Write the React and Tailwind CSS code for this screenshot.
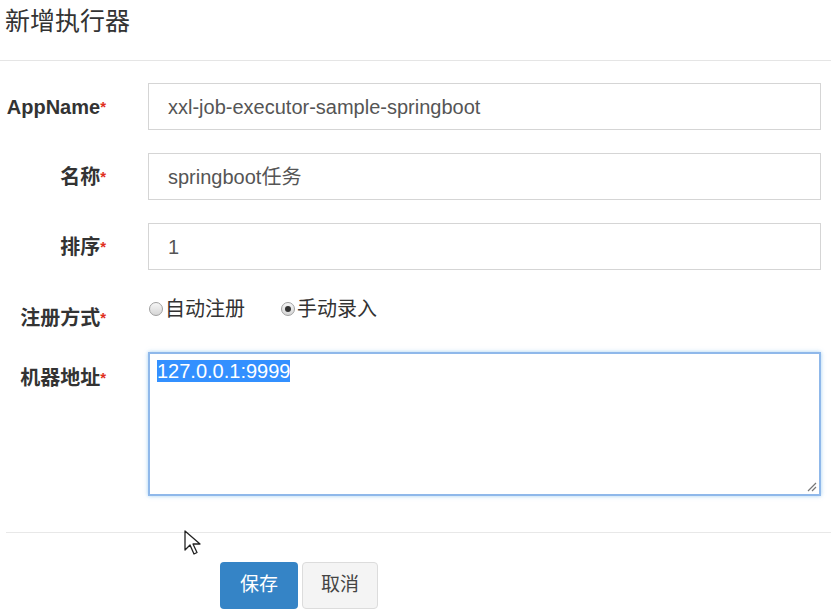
import React from 'react';

const font = { fontFamily: '"Liberation Sans", "Noto Sans CJK SC", sans-serif' };

function Label({ children }) {
  return (
    <div className="w-[101px] shrink-0 text-right text-[20px] font-bold text-[#333] whitespace-nowrap leading-[24px]">
      {children}
      <span className="text-[#e0301e] text-[15px] align-top">*</span>
    </div>
  );
}

function Radio({ checked, label }) {
  return (
    <label className="flex items-center text-[20px] text-[#333] leading-[24px]">
      <span className="w-[14px] h-[14px] rounded-full border border-[#a0a0a0] bg-gradient-to-b from-[#f6f6f6] to-[#d6d6d6] flex items-center justify-center">
        {checked && <span className="w-[6px] h-[6px] rounded-full bg-[#333]" />}
      </span>
      <span className="ml-[2px]">{label}</span>
    </label>
  );
}

export default function App() {
  return (
    <div className="w-[831px] h-[609px] bg-white relative overflow-hidden" style={font}>
      <div className="h-[61px] border-b border-[#e5e5e5] pl-[5px] pt-[5px]">
        <h4 className="text-[25px] text-[#333] leading-[32px]">新增执行器</h4>
      </div>

      <div className="pt-[22px] pl-[5px] pr-[10px]">
        <div className="flex items-center">
          <Label>AppName</Label>
          <div className="ml-[42px] flex-1 h-[47px] border border-[#d5d5d5] flex items-center px-[19px] text-[20px] text-[#555]">
            xxl-job-executor-sample-springboot
          </div>
        </div>
        <div className="flex items-center mt-[23px]">
          <Label>名称</Label>
          <div className="ml-[42px] flex-1 h-[47px] border border-[#d5d5d5] flex items-center px-[19px] text-[20px] text-[#555]">
            springboot任务
          </div>
        </div>
        <div className="flex items-center mt-[23px]">
          <Label>排序</Label>
          <div className="ml-[42px] flex-1 h-[47px] border border-[#d5d5d5] flex items-center px-[19px] text-[20px] text-[#555]">
            1
          </div>
        </div>
        <div className="flex mt-[27px] h-[55px]">
          <div className="pt-[9px]"><Label>注册方式</Label></div>
          <div className="ml-[43px] flex gap-[36px] items-start">
            <Radio label="自动注册" />
            <Radio checked label="手动录入" />
          </div>
        </div>
        <div className="flex">
          <div className="pt-[14px]"><Label>机器地址</Label></div>
          <div className="ml-[42px] flex-1 h-[144px] border-2 border-[#8fb8ea] shadow-[0_0_4px_rgba(102,175,233,0.6)] relative px-[7px] pt-[5px] text-[20px] leading-[24px]">
            <span className="bg-[#3390ff] text-white">127.0.0.1:9999</span>
            <svg className="absolute right-[2px] bottom-[2px]" width="12" height="12" viewBox="0 0 12 12">
              <path d="M11 3 L3 11 M11 7 L7 11" stroke="#777" strokeWidth="1.2" />
            </svg>
          </div>
        </div>
      </div>

      <div className="mt-[36px] ml-[6px] border-t border-[#e8e8e8]" />

      <div className="flex gap-[4px] pl-[220px] pt-[29px]">
        <button className="w-[78px] h-[47px] rounded-[4px] bg-[#3584c6] text-white text-[19px]">保存</button>
        <button className="w-[76px] h-[47px] rounded-[4px] bg-[#f4f4f4] border border-[#dcdcdc] text-[#444] text-[19px]">取消</button>
      </div>

      <svg className="absolute left-[184px] top-[530px]" width="20" height="28" viewBox="0 0 20 28">
        <path d="M1 1 L1 20 L6 15 L10 24 L13 22.5 L9 14 L16 14 Z" fill="white" stroke="#222" strokeWidth="1.3" strokeLinejoin="round" />
      </svg>
    </div>
  );
}
